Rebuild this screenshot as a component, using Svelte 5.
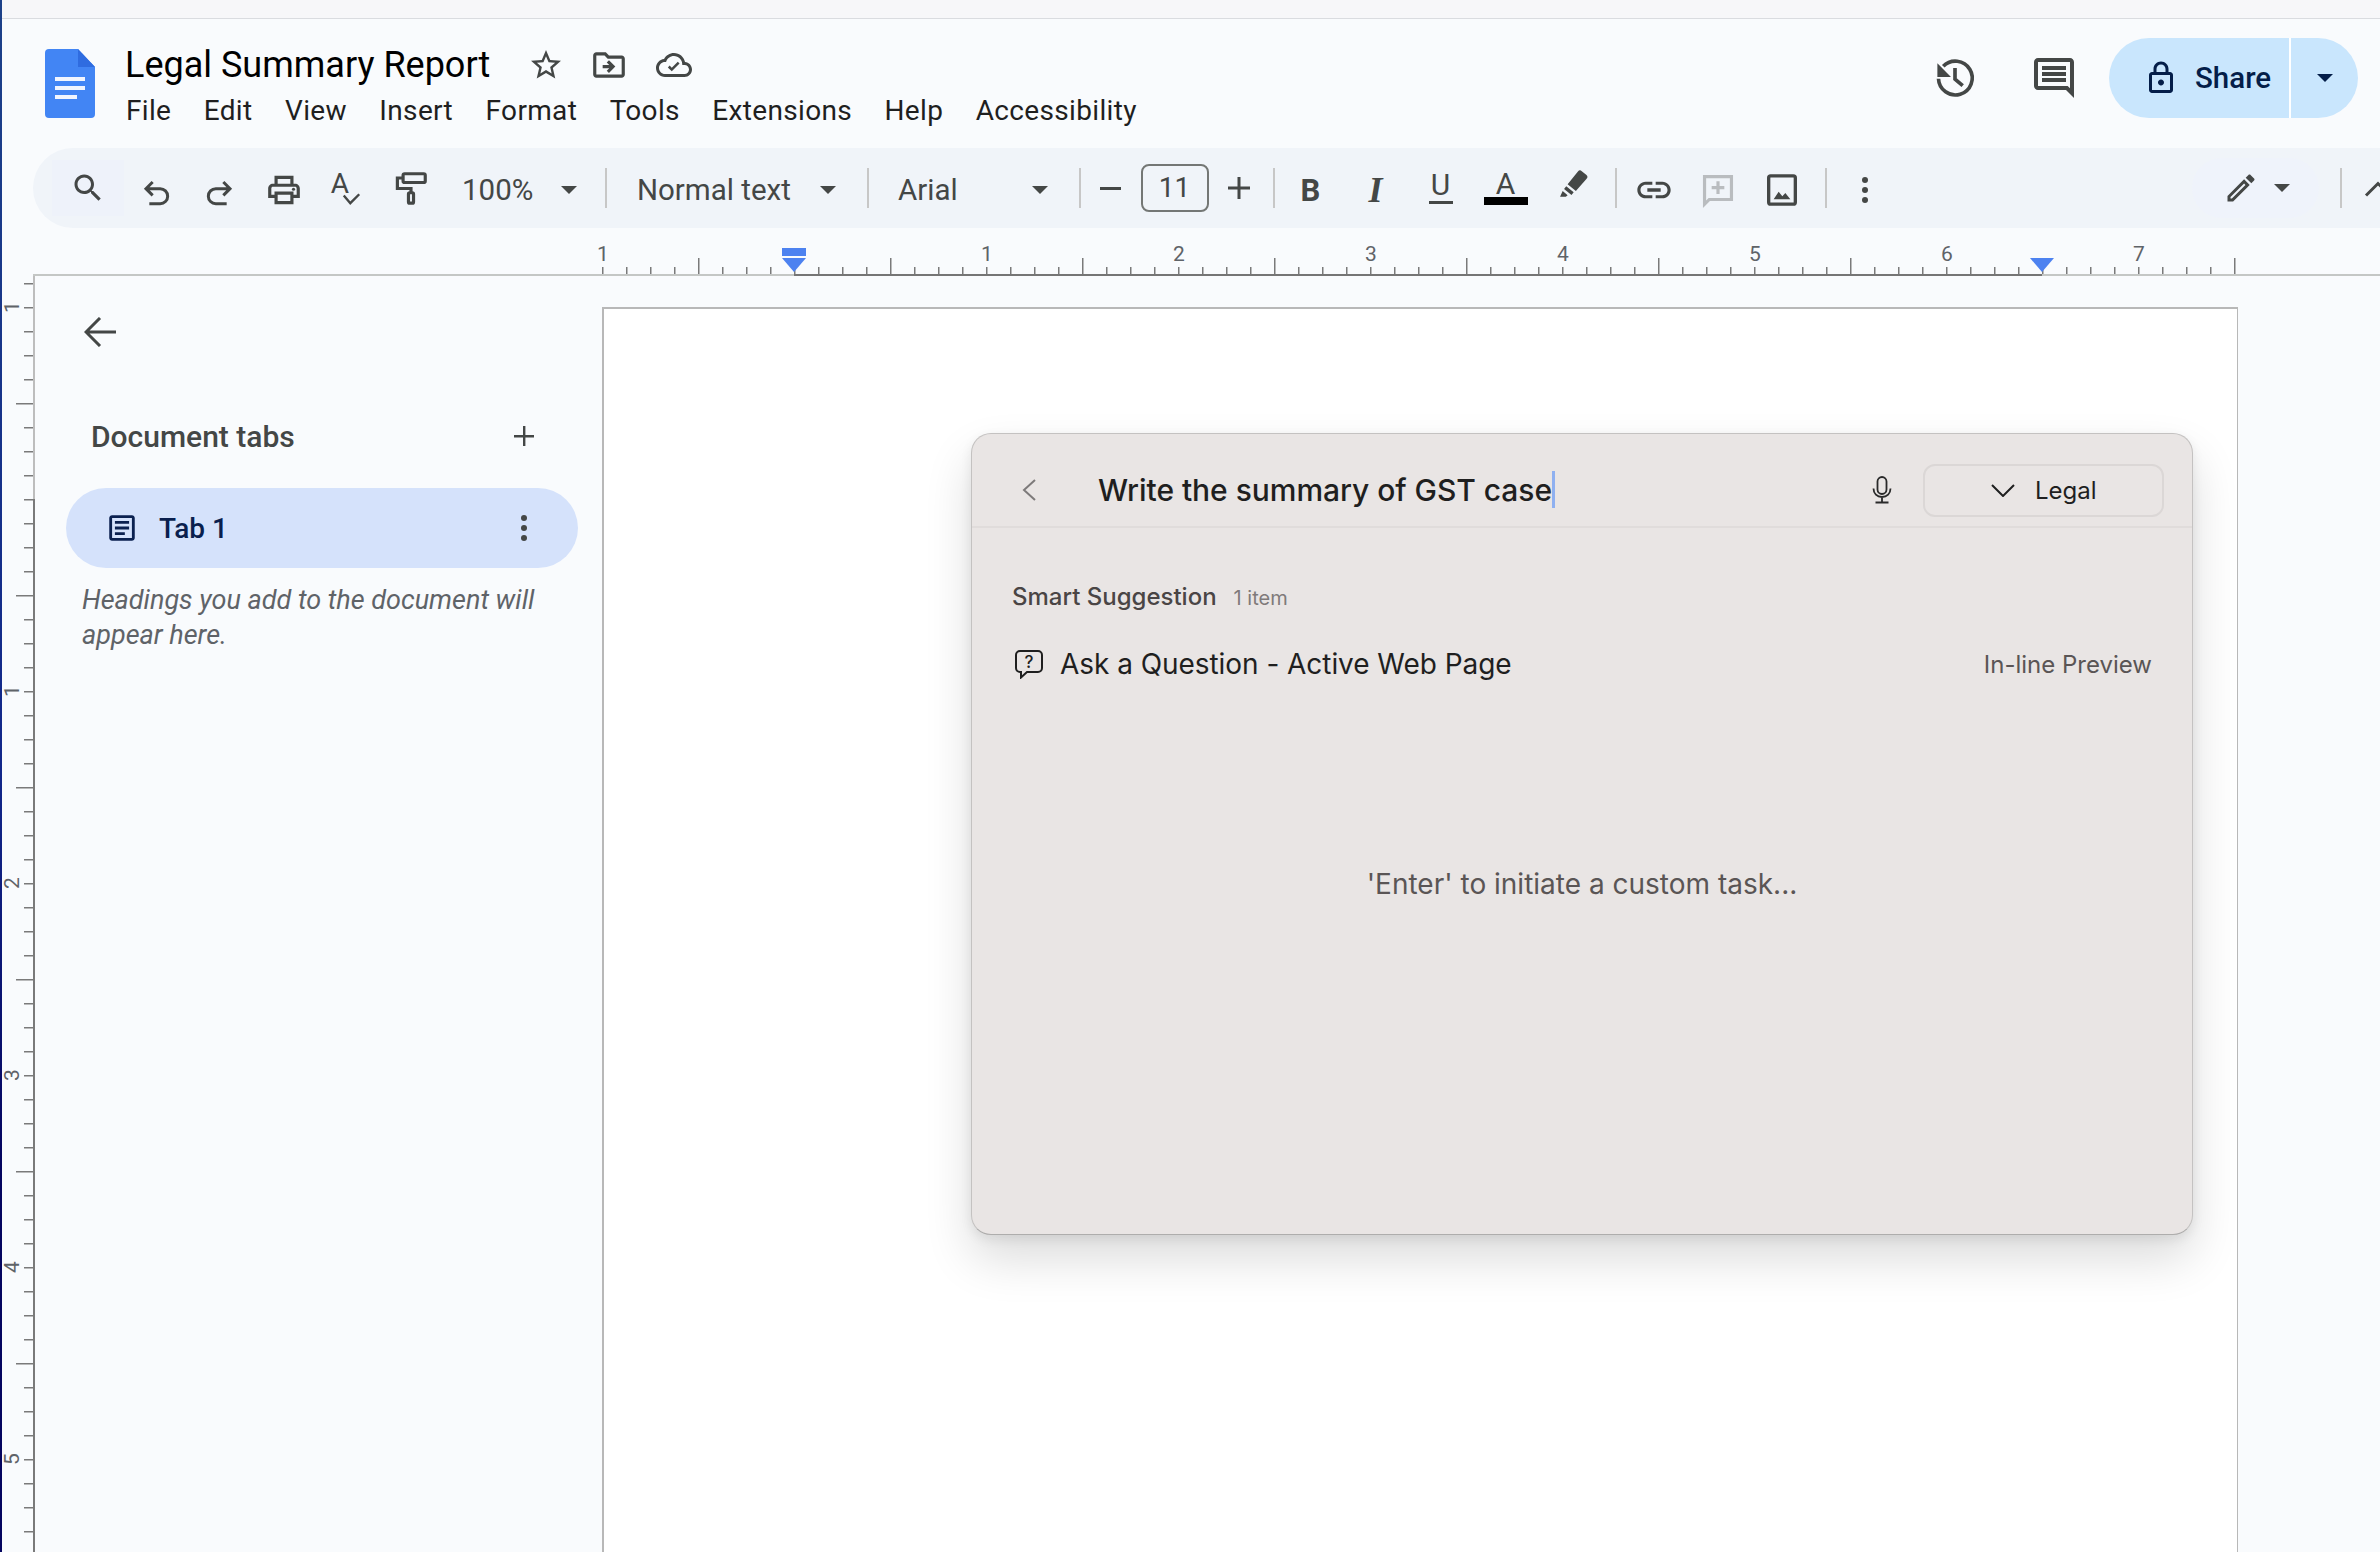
<script lang="ts">
  const menus = ["File", "Edit", "View", "Insert", "Format", "Tools", "Extensions", "Help", "Accessibility"];

  // horizontal ruler: an inch is 192px, the zero sits on the left margin
  const zeroX = 794;
  const hTicks: { x: number; tall: boolean }[] = [];
  for (let k = -8; k <= 60; k++) {
    hTicks.push({ x: zeroX + k * 24, tall: ((k % 8) + 8) % 8 === 4 });
  }
  const hDigits = [-1, 1, 2, 3, 4, 5, 6, 7];

  // vertical ruler: starts at the strip top, y is relative to it
  const zeroY = 499 - 276;
  const vTicks: { y: number; tall: boolean }[] = [];
  for (let k = -9; k <= 45; k++) {
    vTicks.push({ y: zeroY + k * 24, tall: ((k % 8) + 8) % 8 === 4 });
  }
  const vDigits = [-1, 1, 2, 3, 4, 5];
</script>

<div class="app">
  <div class="edge"></div>
  <div class="strip"></div>

  <header class="header">
    <svg class="logo" viewBox="0 0 50 69" width="50" height="69">
      <path d="M4 0h29l17 18v47a4 4 0 0 1-4 4H4a4 4 0 0 1-4-4V4a4 4 0 0 1 4-4z" fill="#4285f4" />
      <path d="M33 0l17 18H33z" fill="#2f6ce0" />
      <rect x="10" y="28" width="30" height="4" fill="#f1f5fe" />
      <rect x="10" y="37" width="30" height="4" fill="#f1f5fe" />
      <rect x="10" y="46" width="22" height="4" fill="#f1f5fe" />
    </svg>
    <div class="titles">
      <div class="title-row">
        <span class="title">Legal Summary Report</span>
        <svg class="t-star" viewBox="0 0 24 24" width="36" height="36"><path d="M22 9.240l-7.190-.620L12 2 9.190 8.630 2 9.240l5.460 4.730L5.820 21 12 17.270 18.180 21l-1.630-7.030L22 9.240zM12 15.400l-3.760 2.270 1-4.280-3.320-2.880 4.380-.380L12 6.100l1.710 4.040 4.380.380-3.320 2.880 1 4.280L12 15.400z" /></svg>
        <svg class="t-folder" viewBox="0 0 24 24" width="38" height="38"><path d="M20 6h-8l-2-2H4C2.900 4 2 4.900 2 6v12c0 1.100.900 2 2 2h16c1.100 0 2-.900 2-2V8C22 6.900 21.100 6 20 6zM20 18L4 18V6h5.170l2 2H20V18zM12.160 12H8v2h4.160l-1.590 1.590L11.990 17 16 13.010 11.990 9l-1.410 1.410L12.160 12z" /></svg>
        <svg class="t-cloud" viewBox="0 0 24 24" width="36" height="36"><path d="M19.350 10.040C18.670 6.590 15.640 4 12 4 9.110 4 6.600 5.640 5.350 8.040 2.340 8.360 0 10.910 0 14c0 3.310 2.690 6 6 6h13c2.760 0 5-2.240 5-5 0-2.640-2.050-4.780-4.650-4.960zM19 18H6c-2.210 0-4-1.790-4-4s1.790-4 4-4h.710C7.370 7.690 9.480 6 12 6c3.040 0 5.500 2.460 5.500 5.500v.500H19c1.660 0 3 1.340 3 3s-1.340 3-3 3z" /><path d="M10.500 16.200l-2.600-2.600 1.200-1.200 1.400 1.400 4-4 1.200 1.200z" /></svg>
      </div>
      <nav class="menu">
        {#each menus as m}<span>{m}</span>{/each}
      </nav>
    </div>
    <div class="actions">
      <svg class="a-hist" viewBox="0 0 24 24" width="44" height="44">
        <path d="M5.600 5.600A9.200 9.200 0 1 1 3 12.400" fill="none" stroke="#444746" stroke-width="2" />
        <path d="M2.400 4v7.400h7.400z" fill="#444746" />
        <path d="M12 6.600v6l4.200 3.600" fill="none" stroke="#444746" stroke-width="2" />
      </svg>
      <svg class="a-comment" viewBox="0 0 24 24" width="48" height="48"><path d="M21.990 4c0-1.100-.890-2-1.990-2H4c-1.100 0-2 .900-2 2v12c0 1.100.900 2 2 2h14l4 4-.010-18zM20 4v13.170L18.830 16H4V4h16zM6 12h12v2H6zm0-3h12v2H6zm0-3h12v2H6z" /></svg>
      <div class="share">
        <div class="share-main">
          <svg viewBox="0 0 24 24" width="36" height="36"><path d="M18 8h-1V6c0-2.760-2.240-5-5-5S7 3.240 7 6v2H6c-1.100 0-2 .900-2 2v10c0 1.100.900 2 2 2h12c1.100 0 2-.900 2-2V10c0-1.100-.900-2-2-2zM9 6c0-1.660 1.340-3 3-3s3 1.340 3 3v2H9V6zm9 14H6V10h12v10zm-6-3c1.100 0 2-.900 2-2s-.900-2-2-2-2 .900-2 2 .900 2 2 2z" /></svg>
          <span>Share</span>
        </div>
        <div class="share-more"><i class="caret dark"></i></div>
      </div>
    </div>
  </header>

  <div class="toolbar">
    <button class="tb hl"><svg viewBox="0 0 24 24" width="36" height="36"><path d="M15.500 14h-.790l-.280-.270C15.410 12.590 16 11.110 16 9.500 16 5.910 13.090 3 9.500 3S3 5.910 3 9.500 5.910 16 9.500 16c1.610 0 3.090-.590 4.230-1.570l.270.280v.790l5 4.990L20.490 19l-4.990-5zm-6 0C7.010 14 5 11.990 5 9.500S7.010 5 9.500 5 14 7.010 14 9.500 11.990 14 9.500 14z" /></svg></button>
    <button class="tb low"><svg viewBox="0 0 24 24" width="40" height="40"><path d="M10 6L6 10l4 4M6 10h8.500a4.500 4.500 0 0 1 0 9H8" class="ln thin" /></svg></button>
    <button class="tb low"><svg viewBox="0 0 24 24" width="40" height="40"><path d="M14 6l4 4-4 4M18 10H9.500a4.500 4.500 0 0 0 0 9H16" class="ln thin" /></svg></button>
    <button class="tb nudge"><svg viewBox="0 0 24 24" width="38" height="38"><path d="M19 8h-1V3H6v5H5c-1.660 0-3 1.340-3 3v6h4v4h12v-4h4v-6c0-1.660-1.340-3-3-3zM8 5h8v3H8V5zm8 12v2H8v-4h8v2zm2-2v-2H6v2H4v-4c0-.550.450-1 1-1h14c.550 0 1 .450 1 1v4h-2z" /><circle cx="18" cy="11.500" r="1" /></svg></button>
    <button class="tb spell">
      <span class="spell-a">A</span>
      <svg viewBox="0 0 16 10" width="19" height="12"><path d="M1.500 2l5.500 6.500L14.500 1" class="ln" stroke-width="2" /></svg>
    </button>
    <button class="tb roller"><svg viewBox="0 0 24 24" width="38" height="38"><rect x="7" y="3" width="14" height="5.500" rx="1" class="ln" /><path d="M7 5.700H3.400v6.600H12V15" class="ln" /><rect x="10.400" y="15" width="3.200" height="6.600" rx=".8" class="ln" /></svg></button>

    <div class="drop zoom"><span>100%</span><i class="caret"></i></div>
    <span class="sep"></span>
    <div class="drop style"><span>Normal text</span><i class="caret"></i></div>
    <span class="sep"></span>
    <div class="drop font"><span>Arial</span><i class="caret"></i></div>
    <span class="sep"></span>

    <div class="size">
      <svg viewBox="0 0 21 22" width="21" height="22"><path d="M0 10h21v3H0z" /></svg>
      <span class="size-box">11</span>
      <svg viewBox="0 0 22 22" width="22" height="22"><path d="M9.500 0h3v9.500H22v3h-9.500V22h-3v-9.500H0v-3h9.500z" /></svg>
    </div>
    <span class="sep"></span>

    <button class="tb w65 fmt b">B</button>
    <button class="tb w65 fmt i">I</button>
    <button class="tb w65 fmt u"><span>U</span><em></em></button>
    <button class="tb w65 fmt c"><span>A</span><em></em></button>
    <button class="tb w65 pen">
      <svg viewBox="0 0 24 24" width="33" height="33"><path d="M14.500 3.300a2 2 0 0 1 2.800-.3l3.200 2.600a2 2 0 0 1 .3 2.900L13 17.500 7 12.600zM6 14l5.400 4.400-1.600 2-5.400-4.400zM3.400 17.500l3.600 3-1.300 1.200H1.500z" /></svg>
    </button>
    <span class="sep s-link"></span>

    <button class="tb nudge link"><svg viewBox="0 0 24 24" width="40" height="40"><path d="M3.900 12c0-1.710 1.390-3.100 3.100-3.100h4V7H7c-2.760 0-5 2.240-5 5s2.240 5 5 5h4v-1.900H7c-1.710 0-3.100-1.390-3.100-3.100zM8 13h8v-2H8v2zm9-6h-4v1.900h4c1.710 0 3.100 1.390 3.100 3.100s-1.390 3.100-3.100 3.100h-4V17h4c2.760 0 5-2.240 5-5s-2.240-5-5-5z" /></svg></button>
    <button class="tb off nudge"><svg viewBox="0 0 24 24" width="38" height="38"><path d="M3.500 3.500h17v14.500H6.500l-3 3z" fill="none" stroke="#b9bcbf" stroke-width="2" /><path d="M12 6.500v8M8 10.500h8" fill="none" stroke="#b9bcbf" stroke-width="2" /></svg></button>
    <button class="tb nudge"><svg viewBox="0 0 24 24" width="40" height="40"><rect x="4" y="3.500" width="16" height="17" rx="1.200" class="ln" /><path d="M7 17.500l3-4.500 2.200 2.800 1.800-2 3 3.700z" stroke="none" /></svg></button>
    <span class="sep s-more"></span>
    <button class="tb dots nudge"><i></i><i></i><i></i></button>

    <div class="grow"></div>
    <div class="mode">
      <svg viewBox="0 0 24 24" width="36" height="36"><path d="M3 17.250V21h3.750L17.810 9.940l-3.750-3.750L3 17.250zM5.920 19H5v-.920l9.060-9.060.920.920L5.920 19zM20.710 5.630l-2.340-2.340c-.200-.200-.450-.290-.710-.290s-.510.100-.700.290l-1.830 1.830 3.750 3.750 1.830-1.830c.390-.390.390-1.020 0-1.410z" /></svg>
      <i class="caret"></i>
    </div>
    <span class="sep s-end"></span>
    <svg class="collapse" viewBox="0 0 24 24" width="36" height="36"><path d="M4 17l8-8 8 8" class="ln" /></svg>
  </div>

  <svg class="h-ruler" width="2380" height="48">
    <rect x="33" y="46" width="2347" height="2" fill="#c4c7c5" />
    <rect x="794" y="46" width="1248" height="2" fill="#757575" />
    {#each hTicks as t}
      <rect x={t.x} y={t.tall ? 30 : 39} width="1.500" height={t.tall ? 16 : 7} fill="#7a7a7a" />
    {/each}
    {#each hDigits as n}
      <text x={zeroX + n * 192 + 1} y="33" class="rd" text-anchor="middle">{Math.abs(n)}</text>
    {/each}
    <rect x="782" y="20" width="24" height="8" fill="#4d82f0" />
    <path d="M782 30h24l-12 14z" fill="#4d82f0" />
    <path d="M2030 30h24l-12 14z" fill="#4d82f0" />
  </svg>

  <div class="work">
    <svg class="v-ruler" width="33" height="1276">
      {#each vTicks as t}
        <rect x={t.tall ? 16 : 24} y={t.y} width={t.tall ? 17 : 9} height="1.500" fill="#7a7a7a" />
      {/each}
      {#each vDigits as n}
        <text class="rd" text-anchor="middle" transform="translate(19 {zeroY + n * 192}) rotate(-90)">{Math.abs(n)}</text>
      {/each}
    </svg>

    <aside class="side">
      <svg class="back" viewBox="0 0 32 30" width="32" height="30"><path d="M32 15H3M16 1L2 15l14 14" fill="none" stroke="#444746" stroke-width="3" /></svg>
      <div class="tabs-head">
        <span>Document tabs</span>
        <svg viewBox="0 0 20 20" width="20" height="20"><path d="M9 0h2.400v9H20v2.400h-8.600V20H9v-8.600H0V9h9z" fill="#444746" /></svg>
      </div>
      <div class="tab">
        <svg viewBox="0 0 24 24" width="34" height="34"><path d="M19 5v14H5V5h14m0-2H5c-1.100 0-2 .900-2 2v14c0 1.100.900 2 2 2h14c1.100 0 2-.900 2-2V5c0-1.100-.900-2-2-2z" /><path d="M14 17H7v-2h7v2zm3-4H7v-2h10v2zm0-4H7V7h10v2z" /></svg>
        <span>Tab 1</span>
        <div class="tab-dots"><i></i><i></i><i></i></div>
      </div>
      <p class="hint">Headings you add to the document will appear here.</p>
    </aside>

    <main class="page">
      <section class="dialog">
        <div class="d-head">
          <svg class="d-back" viewBox="0 0 14 22" width="14" height="22"><path d="M13 1L2 11l11 10" fill="none" stroke="#7d7a7a" stroke-width="2" /></svg>
          <span class="d-input">Write the summary of GST case<i class="cursor"></i></span>
          <svg class="d-mic" viewBox="0 0 24 30" width="24" height="30">
            <rect x="7.500" y="2" width="9" height="17" rx="4.500" fill="none" stroke="#2a2a2a" stroke-width="1.800" />
            <path d="M3.500 13.500c0 5 3.500 8.500 8.500 8.500s8.500-3.500 8.500-8.500M12 22v5M5.500 27.500h13" fill="none" stroke="#2a2a2a" stroke-width="1.800" />
          </svg>
          <div class="d-legal">
            <svg viewBox="0 0 24 13" width="24" height="13"><path d="M1 1l11 11L23 1" fill="none" stroke="#1f1f1f" stroke-width="2" /></svg>
            <span>Legal</span>
          </div>
        </div>
        <div class="d-body">
          <div class="d-label"><b>Smart Suggestion</b><small>1 item</small></div>
          <div class="d-row">
            <svg viewBox="0 0 30 30" width="30" height="30">
              <path d="M6 2h18a4 4 0 0 1 4 4v13a4 4 0 0 1-4 4H13l-6 5.500V23H6a4 4 0 0 1-4-4V6a4 4 0 0 1 4-4z" fill="none" stroke="#1f1f1f" stroke-width="2" />
              <text x="15" y="19" class="q" text-anchor="middle">?</text>
            </svg>
            <span class="d-ask">Ask a Question - Active Web Page</span>
            <span class="d-preview">In-line Preview</span>
          </div>
          <div class="d-empty">'Enter' to initiate a custom task...</div>
        </div>
      </section>
    </main>
  </div>
</div>

<style>
  :global(body) {
    margin: 0;
    background: #f9fbfd;
    overflow: hidden;
  }

  .app {
    position: relative;
    width: 2380px;
    height: 1552px;
    overflow: hidden;
    background: #f9fbfd;
    font-family: Roboto, "Liberation Sans", sans-serif;
    color: #1f1f1f;
  }

  .edge {
    position: absolute;
    left: 0;
    top: 0;
    bottom: 0;
    width: 2px;
    background: linear-gradient(#1d4189, #12278a 50%, #05055f 75%);
    z-index: 5;
  }

  .strip {
    height: 18px;
    background: #f7f7f9;
    border-bottom: 1px solid #dadce0;
  }

  svg {
    display: block;
    flex: none;
    fill: #444746;
  }

  .ln {
    fill: none;
    stroke: #444746;
    stroke-width: 2;
  }

  .ln.thin {
    stroke-width: 1.800;
  }

  /* header */
  .header {
    display: flex;
    height: 129px;
    padding-left: 45px;
    box-sizing: border-box;
  }

  .logo {
    margin-top: 30px;
  }

  .titles {
    margin-left: 30px;
    padding-top: 24px;
  }

  .title-row {
    display: flex;
    align-items: center;
    height: 43px;
  }

  .title {
    font-size: 36px;
    color: #000;
    width: 387px;
    white-space: nowrap;
  }

  .t-star {
    margin-left: 16px;
    fill: #444746;
  }

  .t-folder {
    margin-left: 26px;
  }

  .t-cloud {
    margin-left: 28px;
  }

  .menu {
    display: flex;
    gap: 32.500px;
    margin-top: 7px;
    margin-left: 1px;
    font-size: 28px;
    line-height: 36px;
    letter-spacing: 0.33px;
    color: #1f1f1f;
  }

  .actions {
    margin-left: auto;
    display: flex;
    align-items: center;
    padding-bottom: 11px;
    margin-right: 22px;
  }

  .a-hist {
    margin-right: 53px;
  }

  .a-comment {
    margin-right: 31px;
  }

  .share {
    display: flex;
    width: 249px;
    height: 80px;
    border-radius: 40px;
    overflow: hidden;
    background: #c9e6fd;
  }

  .share-main {
    width: 182px;
    display: flex;
    align-items: center;
    padding-left: 34px;
    gap: 16px;
    box-sizing: border-box;
    border-right: 2px solid #fff;
    font-size: 29.500px;
    font-weight: 500;
    color: #041e49;
  }

  .share-main svg {
    fill: #041e49;
  }

  .share-more {
    flex: 1;
    display: flex;
    align-items: center;
    justify-content: center;
  }

  .caret {
    display: block;
    flex: none;
    width: 0;
    height: 0;
    border-left: 8px solid transparent;
    border-right: 8px solid transparent;
    border-top: 8px solid #444746;
  }

  .caret.dark {
    border-top-color: #041e49;
  }

  /* toolbar */
  .toolbar {
    display: flex;
    align-items: center;
    height: 80px;
    margin-left: 33px;
    padding-left: 19px;
    border-radius: 40px 0 0 40px;
    background: #f0f4f9;
    color: #444746;
    font-size: 29.500px;
  }

  .tb {
    flex: none;
    width: 64px;
    height: 56px;
    padding: 0;
    border: 0;
    background: none;
    display: flex;
    align-items: center;
    justify-content: center;
    font: inherit;
    color: inherit;
  }

  .w65 {
    width: 65px;
  }

  .hl {
    width: 72px;
    background: #eef2fa;
  }

  .low svg {
    margin-top: 8px;
  }

  .nudge {
    padding-top: 4px;
    box-sizing: border-box;
  }

  .link {
    margin-left: 5px;
  }

  .roller svg {
    margin-left: -3px;
  }

  .spell-a {
    font-size: 28px;
    line-height: 30px;
    margin-top: -8px;
    margin-left: -4px;
  }

  .spell svg {
    margin-top: 21px;
    margin-left: -7px;
  }

  .drop {
    display: flex;
    align-items: center;
    justify-content: space-between;
    box-sizing: border-box;
    flex: none;
    padding-top: 3px;
  }

  .zoom {
    width: 161px;
    padding: 3px 28px 0 18px;
  }

  .style {
    width: 260px;
    padding: 3px 31px 0 30px;
  }

  .font {
    width: 210px;
    padding: 3px 31px 0 29px;
  }

  .sep {
    flex: none;
    width: 2px;
    height: 40px;
    background: #c7c7c7;
  }

  .size {
    display: flex;
    align-items: center;
    justify-content: space-between;
    box-sizing: border-box;
    width: 192px;
    padding: 0 23px 0 19px;
  }

  .size-box {
    box-sizing: border-box;
    width: 68px;
    height: 48px;
    line-height: 44px;
    border: 2px solid #747775;
    border-radius: 8px;
    text-align: center;
    color: #444746;
    font-size: 28px;
  }

  .fmt {
    font-weight: 700;
    position: relative;
    font-size: 30px;
  }

  .b {
    margin-left: 3px;
    font-size: 31px;
    padding-top: 4px;
    box-sizing: border-box;
  }

  .i {
    font-family: "Liberation Serif", serif;
    font-style: italic;
    font-size: 36px;
    padding-top: 4px;
    box-sizing: border-box;
  }

  .u,
  .c {
    flex-direction: column;
    font-weight: 400;
    line-height: 26px;
  }

  .u span,
  .c span {
    height: 26px;
  }

  .u em {
    display: block;
    width: 24px;
    height: 3px;
    margin-top: 3px;
    background: #444746;
  }

  .c em {
    display: block;
    width: 44px;
    height: 8px;
    margin-top: 0;
    background: #000;
  }

  .pen svg {
    margin-top: -10px;
    margin-left: 8px;
  }

  .s-link {
    margin-left: 12px;
  }

  .s-more {
    margin-left: 11px;
  }

  .dots {
    flex-direction: column;
    gap: 4px;
    width: 76px;
  }

  .dots i,
  .tab-dots i {
    display: block;
    width: 6px;
    height: 6px;
    border-radius: 50%;
    background: #444746;
  }

  .grow {
    flex: 1;
  }

  .mode {
    display: flex;
    align-items: center;
    gap: 15px;
    box-sizing: border-box;
    width: 127px;
    height: 60px;
    padding-left: 31px;
    border-radius: 30px;
    background: #eff3fb;
  }

  .s-end {
    margin-left: 21px;
  }

  .collapse {
    margin-left: 18px;
    margin-right: -16px;
  }

  /* rulers */
  .h-ruler {
    fill: none;
  }

  .rd {
    font-family: Roboto, sans-serif;
    font-size: 21px;
    fill: #5f6368;
  }

  .work {
    display: flex;
    height: 1276px;
  }

  .v-ruler {
    fill: none;
  }

  /* sidebar */
  .side {
    box-sizing: border-box;
    width: 569px;
    background: linear-gradient(#bdbdbd 223px, #7a7a7a 223px) left top / 2px 100% no-repeat;
    padding-left: 51px;
    padding-top: 41px;
  }

  .tabs-head {
    display: flex;
    align-items: center;
    justify-content: space-between;
    width: 450px;
    height: 40px;
    margin-top: 69px;
    padding-left: 7px;
    box-sizing: border-box;
    font-size: 30px;
    font-weight: 500;
    color: #444746;
  }

  .tab {
    display: flex;
    align-items: center;
    box-sizing: border-box;
    width: 512px;
    height: 80px;
    margin: 32px 0 0 -18px;
    padding-left: 39px;
    border-radius: 40px;
    background: #d5e2fb;
    font-size: 28px;
    font-weight: 500;
    color: #0a1f4e;
  }

  .tab svg {
    fill: #0b2150;
  }

  .tab span {
    margin-left: 20px;
  }

  .tab-dots {
    margin-left: auto;
    margin-right: 51px;
    display: flex;
    flex-direction: column;
    gap: 4px;
  }

  .hint {
    margin: 15px 0 0 -2px;
    width: 480px;
    font-size: 27px;
    line-height: 34.500px;
    font-style: italic;
    color: #5f6368;
  }

  /* page */
  .page {
    position: relative;
    box-sizing: border-box;
    flex: none;
    width: 1636px;
    height: 1300px;
    margin-top: 31px;
    background: #fff;
    border: 1px solid #b8b8b8;
    border-top-width: 2px;
    border-left-width: 2px;
  }

  .dialog {
    position: absolute;
    left: 367px;
    top: 124px;
    box-sizing: border-box;
    width: 1222px;
    height: 802px;
    display: flex;
    flex-direction: column;
    border: 1px solid #c4c2c1;
    border-bottom-color: #aeadac;
    border-radius: 20px;
    background: #e9e5e4;
    box-shadow: 0 24px 48px rgba(0, 0, 0, 0.14), 0 4px 12px rgba(0, 0, 0, 0.08);
    font-family: Inter, "Liberation Sans", sans-serif;
  }

  .d-head {
    flex: none;
    display: flex;
    align-items: center;
    box-sizing: border-box;
    height: 94px;
    border-bottom: 2px solid #e0dcdb;
    padding: 20px 28px 0 50px;
  }

  .d-input {
    margin-left: 62px;
    position: relative;
    font-size: 30px;
    font-weight: 500;
    letter-spacing: -0.04px;
    color: #1f1f1f;
  }

  .cursor {
    position: absolute;
    right: -3px;
    top: -1px;
    width: 3px;
    height: 37px;
    background: #8fb0f0;
  }

  .d-mic {
    margin-left: auto;
    margin-right: 29px;
  }

  .d-legal {
    display: flex;
    align-items: center;
    gap: 20px;
    box-sizing: border-box;
    width: 241px;
    height: 53px;
    padding-left: 66px;
    border: 2px solid #dbd7d6;
    border-radius: 12px;
    font-size: 24px;
    color: #1f1f1f;
  }

  .d-body {
    flex: 1;
    display: flex;
    flex-direction: column;
    padding: 53px 40px 0 40px;
  }

  .d-label {
    display: flex;
    align-items: baseline;
    gap: 17px;
    line-height: 32px;
  }

  .d-label b {
    font-size: 24px;
    font-weight: 500;
    color: #4a4545;
  }

  .d-label small {
    font-size: 20px;
    color: #7f7a7a;
  }

  .d-row {
    display: flex;
    align-items: center;
    margin-top: 32px;
    height: 36px;
  }

  .d-row svg {
    fill: none;
    margin-left: 2px;
  }

  .q {
    font-family: Inter, sans-serif;
    font-size: 17px;
    font-weight: 500;
    fill: #1f1f1f;
  }

  .d-ask {
    margin-left: 16px;
    font-size: 28px;
    letter-spacing: -0.05px;
    color: #1f1f1f;
  }

  .d-preview {
    margin-left: auto;
    font-size: 24px;
    color: #5a5555;
  }

  .d-empty {
    flex: 1;
    display: flex;
    align-items: center;
    justify-content: center;
    font-size: 28px;
    color: #5a5555;
    padding-bottom: 148px;
  }
</style>
